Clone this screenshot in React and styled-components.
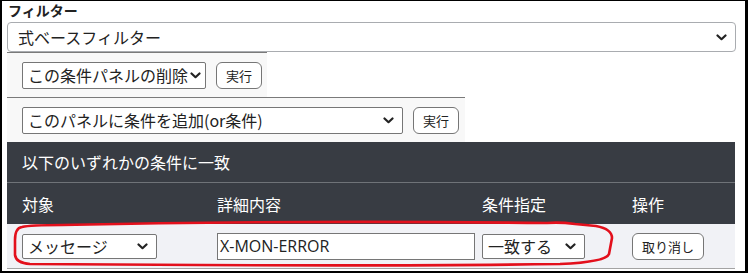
import React from "react";
import styled, { createGlobalStyle } from "styled-components";

const Global = createGlobalStyle`
  html, body { margin: 0; padding: 0; background: #fff; }
  body { font-family: "Noto Sans CJK JP", "Open Sans", sans-serif; }
  * { box-sizing: border-box; }
`;

const Frame = styled.div`
  position: relative;
  width: 748px;
  height: 273px;
  border-style: solid;
  border-color: #000;
  border-width: 1px 3px 2px 2px;
  padding: 0 9px 0 5px;
  overflow: hidden;
  color: #212529;
`;

const Label = styled.div`
  height: 21px;
  padding-left: 1px;
  font-size: 14px;
  font-weight: 700;
  line-height: 19px;
  color: #222;
`;

const Chevron = () => (
  <svg width="11" height="7" viewBox="0 0 11 7">
    <path d="M1.5 1.5 L5.5 5.2 L9.5 1.5" fill="none" stroke="#222" strokeWidth="2.2" strokeLinecap="round" strokeLinejoin="round" />
  </svg>
);

const SelectBox = styled.div`
  display: flex;
  align-items: center;
  justify-content: space-between;
  width: ${(p) => p.$w}px;
  height: ${(p) => p.$h || 27}px;
  padding: 0 ${(p) => p.$pr || 8}px 0 ${(p) => p.$pl || 5}px;
  background: #fff;
  border: 1px solid ${(p) => p.$border || "#767676"};
  border-radius: ${(p) => p.$r || 2}px;
  font-size: 16px;
  line-height: 1;
  color: #222;
  white-space: nowrap;
`;

const Panel = styled.div`
  display: flex;
  align-items: center;
  gap: 10px;
  width: ${(p) => p.$w}px;
  height: 45px;
  padding-left: 15px;
  background: #f8f8f8;
  border-top: 1px solid #7a7a7a;
`;

const Button = styled.button`
  height: 27px;
  padding: 0 9px;
  background: #fff;
  border: 1px solid #767676;
  border-radius: 6px;
  font-family: "Noto Sans CJK JP", sans-serif;
  font-size: 13px;
  color: #222;
  line-height: 1;
`;

const Table = styled.div`
  width: 728px;
  background: #383c43;
  color: #fff;
`;

const Title = styled.div`
  height: 41px;
  display: flex;
  align-items: center;
  padding-left: 15px;
  font-size: 16px;
  border-bottom: 1px solid #6f7378;
`;

const Row = styled.div`
  display: grid;
  grid-template-columns: 195px 265px 150px 1fr;
  align-items: center;
  padding-left: 15px;
  height: ${(p) => p.$h}px;
`;

const HeadCell = styled.div`
  font-size: 16px;
  color: #fff;
`;

const DataRow = styled(Row)`
  background: #f1f2f6;
  border-bottom: 1px solid #a3a3a3;
  color: #222;
`;

const Input = styled.div`
  width: 258px;
  height: 27px;
  display: flex;
  align-items: center;
  padding-left: 2px;
  border: 1px solid #767676;
  background: #fff;
  font-family: "Open Sans", "Noto Sans CJK JP", sans-serif;
  font-size: 16px;
  color: #222;
`;

const Annotation = styled.svg`
  position: absolute;
  left: -2px;
  top: -1px;
  pointer-events: none;
`;

export default function App() {
  return (
    <>
      <Global />
      <Frame>
        <Label>フィルター</Label>
        <SelectBox $w={729} $h={30} $r={4} $border="#a9acb0" $pl={10} $pr={8}>
          <span>式ベースフィルター</span>
          <Chevron />
        </SelectBox>
        <Panel $w={260}>
          <SelectBox $w={184} $pr={4}>
            <span>この条件パネルの削除</span>
            <Chevron />
          </SelectBox>
          <Button>実行</Button>
        </Panel>
        <Panel $w={458}>
          <SelectBox $w={381}>
            <span>このパネルに条件を追加(or条件)</span>
            <Chevron />
          </SelectBox>
          <Button>実行</Button>
        </Panel>
        <Table>
          <Title>以下のいずれかの条件に一致</Title>
          <Row $h={41}>
            <HeadCell>対象</HeadCell>
            <HeadCell>詳細内容</HeadCell>
            <HeadCell>条件指定</HeadCell>
            <HeadCell>操作</HeadCell>
          </Row>
          <DataRow $h={45}>
            <div>
              <SelectBox $w={135} $h={25}>
                <span>メッセージ</span>
                <Chevron />
              </SelectBox>
            </div>
            <div>
              <Input>X-MON-ERROR</Input>
            </div>
            <div>
              <SelectBox $w={103} $h={25}>
                <span>一致する</span>
                <Chevron />
              </SelectBox>
            </div>
            <div>
              <Button>取り消し</Button>
            </div>
          </DataRow>
        </Table>
        <Annotation width="748" height="273" viewBox="0 0 748 273">
          <path
            d="M22 227 Q15 228 15 240 L15 255 Q16 263 30 264 L200 265 Q420 266 560 264 Q606 262 609 254 L612 238 Q612 229 596 226 L575 224 Q560 222 547 223 Q300 220 62 225 Q30 225 22 227 Z"
            fill="none"
            stroke="#e3101c"
            strokeWidth="2.6"
            strokeLinejoin="round"
          />
        </Annotation>
      </Frame>
    </>
  );
}
